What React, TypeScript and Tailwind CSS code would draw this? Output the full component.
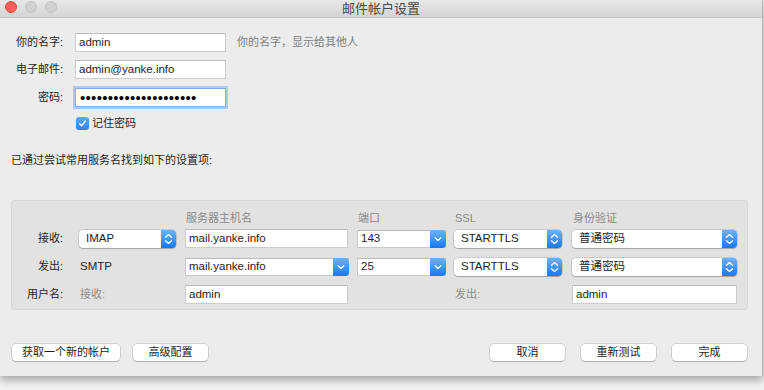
import type { ReactNode } from "react";

const FONT = { fontFamily: '"Liberation Sans", "Noto Sans CJK SC", sans-serif' };

function Stepper() {
  return (
    <div className="w-[15px] h-full rounded-r-[4px] bg-gradient-to-b from-[#6ab2fb] to-[#1477f4] flex items-center justify-center">
      <svg width="15" height="18" viewBox="0 0 15 18" fill="none">
        <path d="M4.5 7.2 L7.5 4.6 L10.5 7.2" stroke="white" strokeWidth="1.3" strokeLinecap="round" strokeLinejoin="round" />
        <path d="M4.5 10.8 L7.5 13.4 L10.5 10.8" stroke="white" strokeWidth="1.3" strokeLinecap="round" strokeLinejoin="round" />
      </svg>
    </div>
  );
}

function Chevron() {
  return (
    <div className="w-[16px] h-full rounded-r-[4px] bg-gradient-to-b from-[#6ab2fb] to-[#1477f4] flex items-center justify-center">
      <svg width="16" height="18" viewBox="0 0 16 18" fill="none">
        <path d="M5.2 7.8 L8 10.4 L10.8 7.8" stroke="white" strokeWidth="1.3" strokeLinecap="round" strokeLinejoin="round" />
      </svg>
    </div>
  );
}

function Popup({ value, className = "" }: { value: string; className?: string }) {
  return (
    <div
      className={`h-[18px] self-center flex items-center bg-white rounded-[4px] shadow-[0_0_0_0.5px_rgba(0,0,0,0.22),0_1px_1px_rgba(0,0,0,0.18)] ${className}`}
    >
      <span className="flex-1 pl-[7px] text-[11.5px] text-[#1e1e1e] leading-none">{value}</span>
      <Stepper />
    </div>
  );
}

function Combo({ value, className = "" }: { value: string; className?: string }) {
  return (
    <div className={`h-[18px] self-center flex items-center bg-white border border-[#c9c9c9] border-t-[#b9b9b9] ${className}`}>
      <span className="flex-1 pl-[3px] text-[11.5px] text-[#1e1e1e] leading-none">{value}</span>
      <div className="h-[18px] -mr-px -my-px">
        <Chevron />
      </div>
    </div>
  );
}

function Field({ value, className = "" }: { value: ReactNode; className?: string }) {
  return (
    <div className={`h-[19px] flex items-center bg-white border border-[#cdcdcd] border-t-[#bcbcbc] ${className}`}>
      <span className="pl-[3px] text-[11.5px] text-[#1e1e1e] leading-none">{value}</span>
    </div>
  );
}

function Button({ label, className = "" }: { label: string; className?: string }) {
  return (
    <div
      className={`h-[17px] flex items-center justify-center bg-white rounded-[4px] shadow-[0_0_0_0.5px_rgba(0,0,0,0.22),0_1px_1px_rgba(0,0,0,0.16)] text-[11px] text-[#1e1e1e] ${className}`}
    >
      {label}
    </div>
  );
}

const GRID = "grid grid-cols-[68px_106px_172px_97px_118px_165px] items-center";

function BoxLabel({ children }: { children: ReactNode }) {
  return <div className="pr-[16px] text-right text-[11px] text-[#262626]">{children}</div>;
}

export default function App() {
  return (
    <div className="w-[764px] h-[390px] bg-[#f1f1f1] overflow-hidden" style={FONT}>
      <div className="w-[763px] h-[376px] bg-[#ececec] border-r border-[#b4b4b4] shadow-[0_4px_8px_rgba(0,0,0,0.32)] flex flex-col">
        {/* title bar */}
        <div className="relative h-[18px] shrink-0 bg-gradient-to-b from-[#e9e9e9] to-[#d4d4d4] border-b border-[#c4c4c4] flex items-center justify-center">
          <div className="absolute left-[5px] top-[1px] flex gap-[8px]">
            <span className="w-[12px] h-[12px] rounded-full bg-[#fc5f57] border border-[#e14a43]" />
            <span className="w-[12px] h-[12px] rounded-full bg-[#d1d1d1] border border-[#c2c2c2]" />
            <span className="w-[12px] h-[12px] rounded-full bg-[#d1d1d1] border border-[#c2c2c2]" />
          </div>
          <span className="text-[13px] text-[#4a4a4a] leading-none">邮件帐户设置</span>
        </div>

        {/* account form */}
        <div className="flex flex-col pt-[15px]">
          <div className="flex items-center h-[19px]">
            <span className="w-[63px] text-right text-[11px] text-[#262626]">你的名字:</span>
            <Field value="admin" className="ml-[12px] w-[151px]" />
            <span className="ml-[11px] text-[11px] text-[#7d7d7d]">你的名字，显示给其他人</span>
          </div>
          <div className="flex items-center h-[19px] mt-[8px]">
            <span className="w-[63px] text-right text-[11px] text-[#262626]">电子邮件:</span>
            <Field value="admin@yanke.info" className="ml-[12px] w-[151px]" />
          </div>
          <div className="flex items-center h-[19px] mt-[9px]">
            <span className="w-[63px] text-right text-[11px] text-[#262626]">密码:</span>
            <div className="ml-[12px] w-[151px] h-[19px] flex items-center bg-white border border-[#7eaef0] shadow-[0_0_0_2px_#a9cbf6]">
              <span className="pl-[4px] text-[15px] tracking-[0.3px] text-black leading-none">
                {"•".repeat(21)}
              </span>
            </div>
          </div>
          <div className="flex items-center h-[13px] mt-[10px] ml-[76px]">
            <span className="w-[13px] h-[13px] rounded-[3px] bg-gradient-to-b from-[#5fa8fa] to-[#2a82f5] flex items-center justify-center">
              <svg width="9" height="9" viewBox="0 0 9 9" fill="none">
                <path d="M1.6 4.8 L3.6 6.8 L7.4 2" stroke="white" strokeWidth="1.4" strokeLinecap="round" strokeLinejoin="round" />
              </svg>
            </span>
            <span className="ml-[3px] text-[11px] text-[#262626]">记住密码</span>
          </div>

          <div className="mt-[23px] ml-[11px] h-[14px] flex items-center text-[11px] text-[#262626]">
            已通过尝试常用服务名找到如下的设置项:
          </div>

          {/* server settings box */}
          <div className="mt-[33px] ml-[11px] w-[737px] h-[110px] rounded-[4px] bg-[#e2e2e2] shadow-[inset_0_0_0_1px_#d7d7d7] flex flex-col pt-[10px]">
            <div className={`${GRID} h-[14px] text-[11px] text-[#8a8a8a]`}>
              <div />
              <div />
              <div className="pl-[1px]">服务器主机名</div>
              <div className="pl-[1px]">端口</div>
              <div className="pl-[1px]">SSL</div>
              <div className="pl-[1px]">身份验证</div>
            </div>
            <div className={`${GRID} h-[19px] mt-[5px]`}>
              <BoxLabel>接收:</BoxLabel>
              <Popup value="IMAP" className="w-[97px]" />
              <Field value="mail.yanke.info" className="w-[163px]" />
              <Combo value="143" className="w-[89px]" />
              <Popup value="STARTTLS" className="w-[108px]" />
              <Popup value="普通密码" className="w-[165px]" />
            </div>
            <div className={`${GRID} h-[19px] mt-[9px]`}>
              <BoxLabel>发出:</BoxLabel>
              <div className="pl-[1px] text-[11.5px] text-[#262626]">SMTP</div>
              <Combo value="mail.yanke.info" className="w-[164px]" />
              <Combo value="25" className="w-[89px]" />
              <Popup value="STARTTLS" className="w-[108px]" />
              <Popup value="普通密码" className="w-[165px]" />
            </div>
            <div className={`${GRID} h-[19px] mt-[9px]`}>
              <BoxLabel>用户名:</BoxLabel>
              <div className="pl-[1px] text-[11px] text-[#8c8c8c]">接收:</div>
              <Field value="admin" className="w-[163px]" />
              <div />
              <div className="pl-[1px] text-[11px] text-[#8c8c8c]">发出:</div>
              <Field value="admin" className="w-[165px]" />
            </div>
          </div>

          {/* buttons */}
          <div className="mt-[34px] flex items-center px-[12px]">
            <Button label="获取一个新的帐户" className="w-[108px]" />
            <Button label="高级配置" className="ml-[13px] w-[75px]" />
            <div className="flex-1" />
            <Button label="取消" className="w-[75px]" />
            <Button label="重新测试" className="ml-[16px] w-[75px]" />
            <Button label="完成" className="ml-[16px] w-[75px] mr-[3px]" />
          </div>
        </div>
      </div>
    </div>
  );
}
